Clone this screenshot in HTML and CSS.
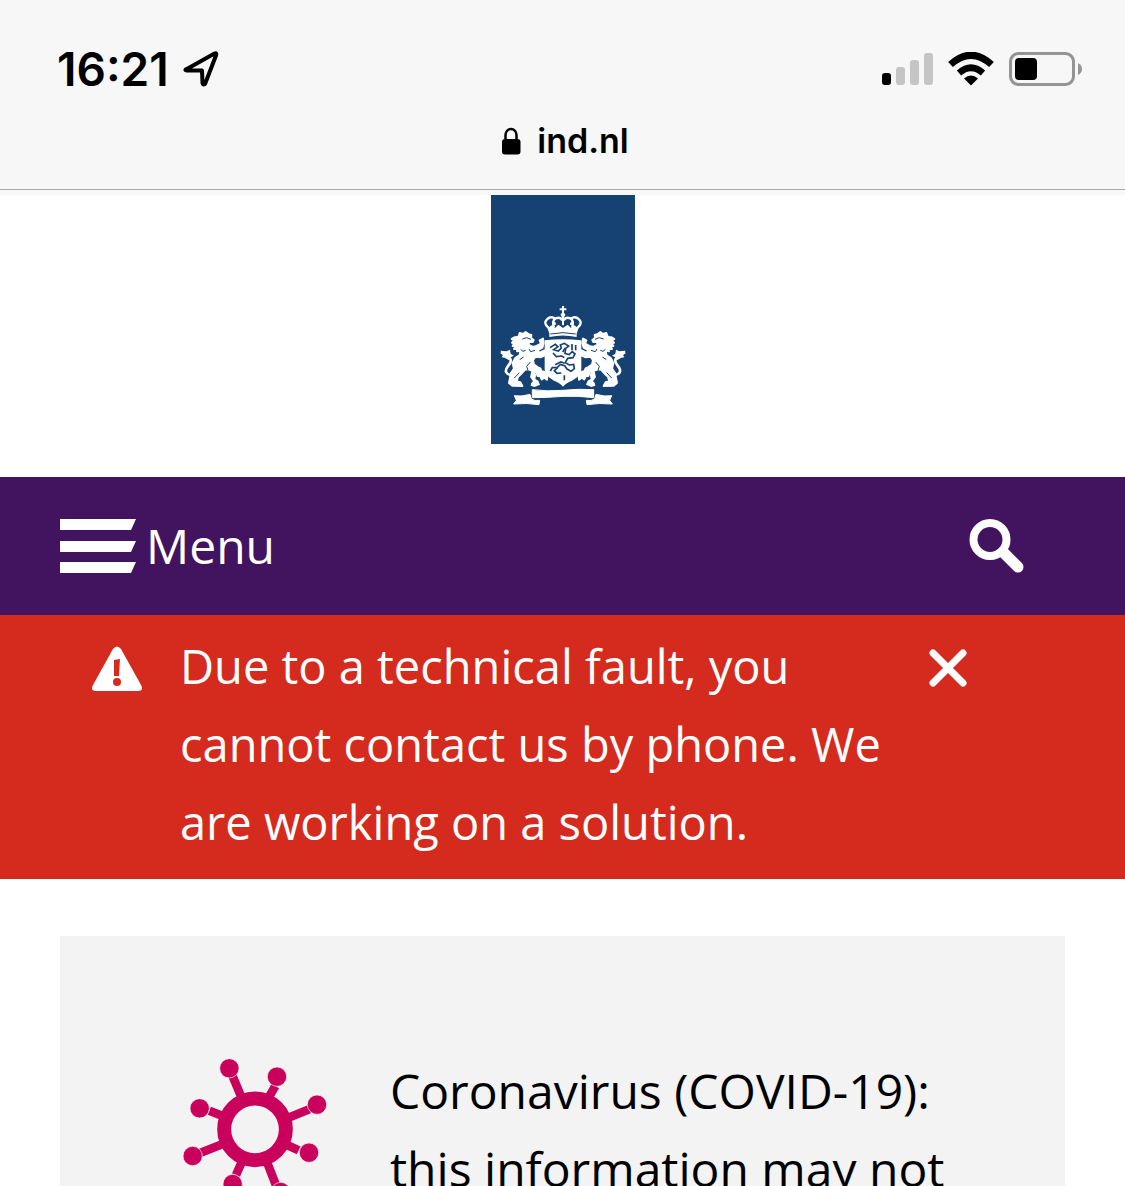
FILE: index.html
```html
<!DOCTYPE html>
<html lang="en">

<head>
    <meta charset="UTF-8">
    <meta name="viewport" content="width=device-width, initial-scale=1.0">
    <title>IND</title>
    <link rel="stylesheet" href="styles.css">
</head>

<body>
    <div class="browser">
        <div class="status">
            <span class="time">16:21</span>
            <svg class="location" width="36" height="36" viewBox="0 0 36 36">
                <path d="M3 18.500 L31.500 2.500 Q34 1.500 33 4.500 L22 33 Q20 34.500 19.500 32 L19 19.500 L4 19.500 Q1.500 19 3 18.500 Z" fill="none" stroke="#000" stroke-width="4" stroke-linejoin="round" />
            </svg>
            <div class="indicators">
                <svg width="52" height="34" viewBox="0 0 52 34">
                    <rect x="1" y="21" width="9" height="12" rx="3" fill="#000" />
                    <rect x="15" y="15" width="9" height="18" rx="3" fill="#c5c5c5" />
                    <rect x="29" y="8" width="9" height="25" rx="3" fill="#c5c5c5" />
                    <rect x="43" y="1" width="9" height="32" rx="3" fill="#c5c5c5" />
                </svg>
                <svg width="46" height="34" viewBox="0 0 46 34">
                    <path d="M2.500 12.500 Q23 -6 43.500 12.500" fill="none" stroke="#000" stroke-width="7" />
                    <path d="M11 21 Q23 10.500 35 21" fill="none" stroke="#000" stroke-width="6.500" />
                    <path d="M16 26.500 Q23 20.500 30 26.500 L23 33.500 Z" fill="#000" />
                </svg>
                <svg width="74" height="34" viewBox="0 0 74 34">
                    <rect x="1.500" y="1.500" width="63" height="31" rx="8" fill="none" stroke="#949494" stroke-width="3" />
                    <rect x="6" y="6" width="22" height="22" rx="4" fill="#000" />
                    <path d="M69 11 Q73 13 73 17 Q73 21 69 23 Z" fill="#949494" />
                </svg>
            </div>
        </div>
        <div class="address">
            <svg width="20" height="28" viewBox="0 0 20 28">
                <path d="M4.500 13 V8 a5.500 6 0 0 1 11 0 V13" fill="none" stroke="#000" stroke-width="2.500" />
                <rect x="1" y="12" width="18.500" height="15.500" rx="3" fill="#000" />
            </svg>
            <span>ind.nl</span>
        </div>
    </div>

    <header class="header">
        <a class="logo" href="#" aria-label="Home">
            <svg viewBox="18 -300 432 747">
                <g fill="#fff">
                    <!-- crown -->
                    <path d="M231 33h6v7h7v6h-7v8q8 4 0 12v25h-6V66q-8-8 0-12v-8h-7v-6h7z" />
                    <path d="M190 98 Q174 84 186 73 Q197 62 211 71 M278 98 Q294 84 282 73 Q271 62 257 71 M207 98 Q200 78 212 70 Q226 65 232 76 M261 98 Q268 78 256 70 Q242 65 236 76" fill="none" stroke="#fff" stroke-width="7" />
                    <path d="M184 89l8 8 9-7 9 9 10-10 14 10 14-10 10 10 9-9 9 7 8-8-9 27v10q-41-9-82 0v-10z" />
                    <circle cx="208" cy="86" r="5" />
                    <circle cx="260" cy="86" r="5" />
                    <!-- shield -->
                    <path d="M179 136 Q207 133 234 133 Q261 133 289 136 V223 Q287 244 261 257 Q242 264 234 275 Q226 264 207 257 Q181 244 179 223 Z" />
                    <!-- left supporter, mirrored for the right one -->
                    <g id="supporter">
                        <path d="M91 127l10-3 3-10 10 3 8-6 9 7 8 2-1 9 8 6-3 6-10-1-3 9 13 7 12-3 13-7-4-10 10-5 2 13-4 14-16 9 8 6 14-7 5 7-5 9-12 5-15-2-7 11 3 13 12 8 7 3 4 9 8 1 9 11-1 13-8-6-8 5-4-9-8-1-4-10-18-8-15-2-12 13-10 9-4 14 11 3 6 11-30-1-10-8 6-30 9-13-4-17 7-14 14-10 2-13-10 2 2-7-11 0 5-8-9-1 5-8-7-2 8-7-9-4 8-5z" stroke="#fff" stroke-width="6" stroke-linejoin="round" />
                        <path d="M84 241 Q50 237 70 212 Q85 194 69 186 Q61 179 48 171" fill="none" stroke="#fff" stroke-width="8" />
                        <path d="M46 167l19 2 10-5 2 12 10 6-10 5-6 8-12-7-9-1 4-7z" />
                        <path d="M140 226l14 12-3 14 9 5 5 12-16 7-12-4 2-9 5-4-9-13z" />
                    </g>
                    <use href="#supporter" transform="translate(468 0) scale(-1 1)" />
                    <!-- ribbon -->
                    <g stroke="#fff" stroke-width="3" stroke-linejoin="round">
                        <path d="M142 284 Q188 290 234 286 Q280 281 326 284 V308 Q280 302 234 304 Q188 308 142 308 Z" />
                        <path d="M88 302 Q110 306 135 298 L139 312 Q149 319 164 316 L162 329 Q125 323 86 327 L94 316 Z" />
                        <path d="M380 302 Q358 306 333 298 L329 312 Q319 319 304 316 L306 329 Q343 323 382 327 L374 316 Z" />
                    </g>
                </g>
                <g fill="none" stroke="#154273" stroke-width="5">
                    <!-- shield lion and billets -->
                    <path d="M195 158l16-10 8 7-13 9 14 4 9-9-3-9 12-5 13 8-9 7-2 15 12 4 10-9 8 7-6 11-16 2-7 13 12 7 13-2 2 13-10 8-12-7-7-10-13-4-9 9-15 1-6 10" />
                    <path d="M204 174l10 11 16-2 8 5M211 209l16-8 12 4M218 218l-10 9 8 8 13-1M233 171l8-12" />
                    <path d="M261 147v19M272 150v16M238 241v15" />
                    <!-- fur and legs -->
                    <g stroke-width="3">
                        <path d="M112 132l13-4 13 5M107 163l7 6 8-3M132 162l5 8 13-4M104 194l12-8M136 201l-11 13 6 19M88 249l15-16" />
                        <path d="M356 132l-13-4-13 5M361 163l-7 6-8-3M336 162l-5 8-13-4M364 194l-12-8M332 201l11 13-6 19M380 249l-15-16" />
                        <path d="M196 117q38-8 76 0" />
                    </g>
                </g>
            </svg>
        </a>
    </header>

    <nav class="navbar">
        <button class="menu-btn" type="button">
            <svg width="76" height="54" viewBox="0 0 76 54">
                <path d="M0 0H76L71 11H0Z M0 22H76L71 33H0Z M0 43H76L71 54H0Z" fill="#fff" />
            </svg>
            <span>Menu</span>
        </button>
        <button class="icon-btn" type="button" aria-label="Search">
            <svg width="55" height="55" viewBox="0 0 55 55">
                <circle cx="21" cy="20.500" r="16.500" fill="none" stroke="#fff" stroke-width="8" />
                <path d="M34 33 L49 48" stroke="#fff" stroke-width="11" stroke-linecap="round" />
            </svg>
        </button>
    </nav>

    <div class="alert" role="alert">
        <svg class="warning" width="50" height="46" viewBox="0 0 50 46">
            <path d="M21 3 Q25 -2 29 3 L49 39 Q52 45 46 45 H4 Q-2 45 1 39 Z" fill="#fff" />
            <path d="M22 14 L28 13 L27 30 H22 Z" fill="#d52b1e" />
            <circle cx="25" cy="36" r="4" fill="#d52b1e" />
        </svg>
        <p class="alert-text">Due to a technical fault, you cannot contact us by phone. We are working on a solution.</p>
        <button class="icon-btn close" type="button" aria-label="Close">
            <svg width="38" height="38" viewBox="0 0 38 38">
                <path d="M4 4 L34 34 M34 4 L4 34" stroke="#fff" stroke-width="7" stroke-linecap="round" />
            </svg>
        </button>
    </div>

    <main class="content">
        <section class="card">
            <svg class="virus" width="150" height="150" viewBox="60 50 450 450">
                <g stroke="#ca005d" stroke-width="26">
                    <path d="M218 108L242 165M346 137L328 168M448 207L385 232M416 330L375 311M348 435L322 368M228 404L244 368M122 337L190 310M148 211L190 228" />
                    <circle cx="285" cy="267" r="92.500" fill="none" stroke-width="42" />
                </g>
                <g fill="#ca005d" stroke="#f3f3f3" stroke-width="2">
                    <circle cx="208" cy="84" r="29" />
                    <circle cx="351" cy="109" r="29" />
                    <circle cx="471" cy="193" r="29" />
                    <circle cx="447" cy="337" r="29" />
                    <circle cx="362" cy="455" r="29" />
                    <circle cx="218" cy="431" r="29" />
                    <circle cx="98" cy="347" r="29" />
                    <circle cx="119" cy="204" r="29" />
                </g>
            </svg>
            <p class="card-text">Coronavirus (COVID-19): this information may not</p>
        </section>
    </main>
</body>

</html>
```

FILE: styles.css
```css
* {
    padding: 0;
    margin: 0;
    box-sizing: border-box;
}

body {
    background-color: #fff;
    color: #000;
    font-family: "Open Sans", "Noto Sans", sans-serif;
    font-size: 48px;
    line-height: 78px;
    display: flex;
    flex-direction: column;
    height: 100vh;
    overflow: hidden;
}

svg {
    display: block;
    flex-shrink: 0;
}

button {
    background: none;
    border: none;
    color: inherit;
    font: inherit;
    cursor: pointer;
}

.browser {
    background-color: #f7f7f7;
    border-bottom: 1px solid #a9a9a9;
    font-family: Inter, sans-serif;
    font-weight: 600;
    padding: 39px 42px 26px 57px;
}

.status {
    display: flex;
    align-items: center;
    height: 60px;
}

.time {
    font-size: 46px;
    line-height: 60px;
}

.location {
    margin-left: 14px;
}

.indicators {
    display: flex;
    gap: 15px;
    margin-left: auto;
}

.address {
    display: flex;
    justify-content: center;
    align-items: center;
    gap: 16px;
    font-size: 34px;
    line-height: 44px;
    margin-top: 20px;
    padding-right: 10px;
}

.header {
    display: flex;
    justify-content: center;
    border-top: 5px solid #f7f7f7;
    padding-bottom: 33px;
}

.logo {
    background-color: #154273;
    width: 144px;
}

.navbar {
    background-color: #42145f;
    color: #fff;
    display: flex;
    justify-content: space-between;
    align-items: center;
    padding: 30px 101px 30px 60px;
}

.menu-btn {
    display: flex;
    align-items: center;
    gap: 10px;
}

.alert {
    background-color: #d52b1e;
    color: #fff;
    display: flex;
    align-items: flex-start;
    font-size: 47px;
    gap: 38px;
    padding: 12px 158px 18px 92px;
}

.alert-text {
    flex: 1;
}

.warning {
    margin-top: 19px;
}

.close {
    margin-top: 22px;
}

.content {
    padding: 57px 60px 0;
    flex: 1;
    min-height: 0;
}

.card {
    background-color: #f3f3f3;
    display: flex;
    align-items: flex-start;
    gap: 60px;
    padding: 116px 100px 116px 120px;
}

.virus {
    margin-top: 5px;
}

.card-text {
    flex: 1;
}
```
